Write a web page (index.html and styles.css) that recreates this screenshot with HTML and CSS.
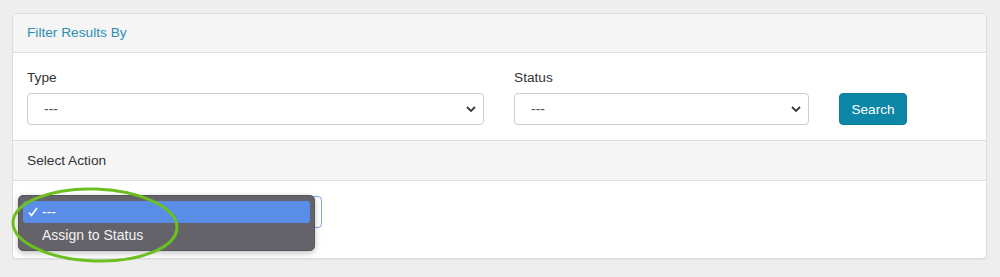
FILE: index.html
```html
<!DOCTYPE html>
<html>
<head>
<meta charset="utf-8">
<link rel="stylesheet" href="styles.css">
</head>
<body>
<div class="panel">
  <div class="panel-heading title">Filter Results By</div>
  <div class="panel-body">
    <div class="form-row">
      <div class="field field-type">
        <div class="label">Type</div>
        <div class="select-box">
          <span>---</span>
          <svg class="chev" width="10" height="6" viewBox="0 0 10 6"><path d="M1 1 L5 5 L9 1" fill="none" stroke="#3a3a3a" stroke-width="1.8"/></svg>
        </div>
      </div>
      <div class="field field-status">
        <div class="label">Status</div>
        <div class="select-box">
          <span>---</span>
          <svg class="chev" width="10" height="6" viewBox="0 0 10 6"><path d="M1 1 L5 5 L9 1" fill="none" stroke="#3a3a3a" stroke-width="1.8"/></svg>
        </div>
      </div>
      <button class="btn-search">Search</button>
    </div>
  </div>
  <div class="panel-heading section">Select Action</div>
  <div class="panel-body action-body">
    <div class="select-box action-select focused">
      <span></span>
      <svg class="chev" width="10" height="6" viewBox="0 0 10 6"><path d="M1 1 L5 5 L9 1" fill="none" stroke="#3a3a3a" stroke-width="1.8"/></svg>
    </div>
    <div class="menu">
      <div class="menu-item selected">
        <svg class="check" width="10" height="10" viewBox="0 0 10 10"><path d="M1 5.5 L3.5 8.5 L9 1" fill="none" stroke="#fff" stroke-width="1.6"/></svg>
        <span>---</span>
      </div>
      <div class="menu-item">
        <span class="check-space"></span>
        <span>Assign to Status</span>
      </div>
    </div>
  </div>
</div>
<svg class="annotation" width="1000" height="277" viewBox="0 0 1000 277">
  <ellipse cx="95" cy="225" rx="82" ry="36" fill="none" stroke="#6dbf1f" stroke-width="3" transform="rotate(2 95 225)"/>
</svg>
</body>
</html>
```

FILE: styles.css
```css
html, body {
  margin: 0;
  padding: 0;
}
body {
  background: #eeeeee;
  padding: 13px 13px 0 12px;
  font-family: "Liberation Sans", Arial, sans-serif;
  font-size: 14px;
  color: #333;
  position: relative;
  height: 277px;
  box-sizing: border-box;
  overflow: hidden;
}
.panel {
  width: 975px;
  box-sizing: border-box;
  background: #fff;
  border: 1px solid #dddddd;
  border-radius: 4px;
  box-shadow: 0 1px 1px rgba(0,0,0,0.05);
}
.panel-heading {
  background: #f5f5f5;
  height: 38px;
  line-height: 38px;
  padding: 0 14px;
  border-bottom: 1px solid #dddddd;
  font-size: 13.7px;
}
.title {
  color: #2b8fb4;
  border-radius: 3px 3px 0 0;
}
.section {
  border-top: 1px solid #dddddd;
  height: 39px;
  line-height: 40px;
  color: #333;
}
.panel-body {
  padding: 15px 14px;
}
.form-row {
  display: flex;
  align-items: flex-end;
  gap: 30px;
}
.field-type { width: 457px; }
.field-status { width: 295px; }
.label {
  line-height: 20px;
  margin-bottom: 5px;
  font-size: 13.7px;
  color: #333;
}
.select-box {
  height: 32px;
  box-sizing: border-box;
  border: 1px solid #cccccc;
  border-radius: 4px;
  display: flex;
  align-items: center;
  justify-content: space-between;
  padding: 0 7px 0 16px;
  color: #555;
  font-size: 14px;
  background: #fff;
}
.chev { display: block; }
.btn-search {
  width: 68px;
  height: 32px;
  background: #0e87a7;
  border: 1px solid #0c7d9b;
  border-radius: 4px;
  color: #fff;
  font-family: "Liberation Sans", Arial, sans-serif;
  font-size: 13.5px;
  padding: 0;
}
.action-body {
  position: relative;
  padding: 15px 14px 30px;
}
.action-select {
  width: 295px;
}
.focused {
  border-color: #7fa6e6;
}
.menu {
  position: absolute;
  left: 5px;
  top: 14px;
  width: 297px;
  height: 56px;
  box-sizing: border-box;
  background: #636369;
  border: 1px solid #55555a;
  border-radius: 5px;
  padding: 5px 4px;
  box-shadow: 0 2px 6px rgba(0,0,0,0.25);
  font-size: 14px;
  color: #f2f2f2;
}
.menu-item {
  height: 22px;
  display: flex;
  align-items: center;
  border-radius: 3px;
  padding-left: 5px;
}
.menu-item.selected {
  background: #5a8de8;
  color: #fff;
}
.check {
  width: 10px;
  height: 10px;
  margin-right: 4px;
  flex: none;
}
.check-space {
  width: 10px;
  margin-right: 4px;
  flex: none;
}
.menu-item + .menu-item {
  margin-top: 1px;
}
.annotation {
  position: absolute;
  left: 0;
  top: 0;
  pointer-events: none;
}
```
